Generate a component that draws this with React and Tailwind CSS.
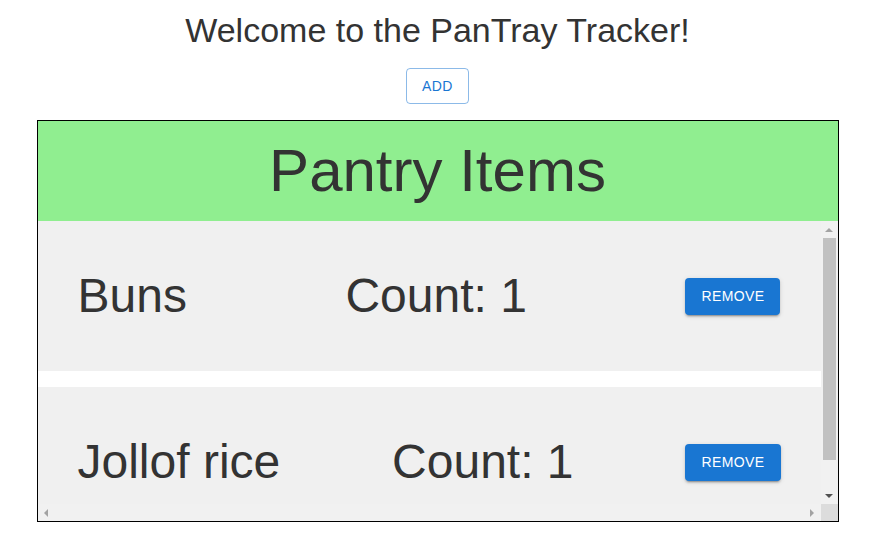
import React from 'react'

const items = [
  { name: 'Buns', count: 1 },
  { name: 'Jollof rice', count: 1 },
]

function Arrow({ dir, dark }) {
  const color = dark ? 'border-t-[#505050]' : 'border-b-[#a3a3a3]'
  if (dir === 'up') return <div className="w-0 h-0 border-x-[4px] border-x-transparent border-b-[4px] border-b-[#a3a3a3]" />
  if (dir === 'down') return <div className={`w-0 h-0 border-x-[4px] border-x-transparent border-t-[4px] ${color}`} />
  if (dir === 'left') return <div className="w-0 h-0 border-y-[4px] border-y-transparent border-r-[4px] border-r-[#a3a3a3]" />
  return <div className="w-0 h-0 border-y-[4px] border-y-transparent border-l-[4px] border-l-[#a3a3a3]" />
}

export default function App() {
  return (
    <div className="w-[875px] flex flex-col items-center gap-4 pt-[10px] bg-white text-[#333] font-['Liberation_Sans',Arial,sans-serif]">
      <h1 className="text-[34px] leading-[1.235]">Welcome to the PanTray Tracker!</h1>
      <button className="border border-[#1976d2]/50 text-[#1976d2] rounded px-[15px] py-[5px] text-[14px] leading-[1.75] tracking-[0.02857em] uppercase">
        Add
      </button>

      <div className="w-[802px] border border-black">
        <div className="h-[100px] bg-[#90ee90] flex items-center justify-center">
          <h2 className="text-[60px] leading-[1.2]">Pantry Items</h2>
        </div>

        <div className="h-[300px] flex flex-col">
          <div className="flex flex-1 min-h-0">
            <div className="flex-1 overflow-hidden flex flex-col gap-4 bg-white">
              {items.map(item => (
                <div key={item.name} className="min-h-[150px] shrink-0 bg-[#f0f0f0] px-10 flex items-center justify-between">
                  <h3 className="text-[48px] leading-[1.167]">{item.name}</h3>
                  <h3 className="text-[48px] leading-[1.167]">Count: {item.count}</h3>
                  <button className="bg-[#1976d2] text-white rounded px-4 py-[6px] text-[14px] leading-[1.75] tracking-[0.02857em] uppercase shadow-[0px_3px_1px_-2px_rgba(0,0,0,0.2),0px_2px_2px_0px_rgba(0,0,0,0.14),0px_1px_5px_0px_rgba(0,0,0,0.12)]">
                    Remove
                  </button>
                </div>
              ))}
            </div>
            <div className="w-[17px] bg-[#f1f1f1] flex flex-col">
              <div className="h-[17px] flex items-center justify-center"><Arrow dir="up" /></div>
              <div className="flex-1 flex flex-col items-center">
                <div className="w-[13px] h-[222px] bg-[#c1c1c1]" />
              </div>
              <div className="h-[17px] flex items-center justify-center"><Arrow dir="down" dark /></div>
            </div>
          </div>
          <div className="h-[17px] flex">
            <div className="flex-1 bg-[#f1f1f1] flex items-center justify-between">
              <div className="w-[17px] flex justify-center"><Arrow dir="left" /></div>
              <div className="w-[17px] flex justify-center"><Arrow dir="right" /></div>
            </div>
            <div className="w-[17px] bg-[#dcdcdc]" />
          </div>
        </div>
      </div>
    </div>
  )
}
